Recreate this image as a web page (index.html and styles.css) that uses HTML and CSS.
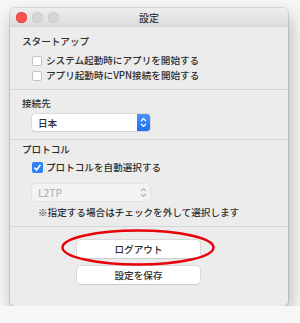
FILE: index.html
```html
<!DOCTYPE html>
<html lang="ja">

<head>
    <meta charset="UTF-8">
    <title>設定</title>
    <link rel="stylesheet" href="styles.css">
</head>

<body>
    <div class="window">
        <div class="titlebar">
            <div class="lights">
                <span class="light red"></span>
                <span class="light"></span>
                <span class="light"></span>
            </div>
            <div class="title">設定</div>
        </div>

        <section class="group group-startup">
            <h2>スタートアップ</h2>
            <label class="check-row"><span class="box"></span>システム起動時にアプリを開始する</label>
            <label class="check-row"><span class="box"></span>アプリ起動時にVPN接続を開始する</label>
        </section>

        <section class="group group-server">
            <h2>接続先</h2>
            <div class="select">
                <span class="select-text">日本</span>
                <span class="stepper">
                    <svg width="7" height="11" viewBox="0 0 7 11">
                        <path d="M1 4 L3.5 1.5 L6 4 M1 7 L3.5 9.5 L6 7" fill="none" stroke="#fff" stroke-width="1.2" />
                    </svg>
                </span>
            </div>
        </section>

        <section class="group group-protocol">
            <h2>プロトコル</h2>
            <label class="check-row"><span class="box checked">
                    <svg width="11" height="11" viewBox="0 0 11 11">
                        <path d="M2.4 5.6 L4.6 7.9 L8.4 2.8" fill="none" stroke="#fff" stroke-width="1.6" />
                    </svg>
                </span>プロトコルを自動選択する</label>
            <div class="select select-disabled">
                <span class="select-text">L2TP</span>
                <span class="stepper">
                    <svg width="7" height="11" viewBox="0 0 7 11">
                        <path d="M1 4 L3.5 1.5 L6 4 M1 7 L3.5 9.5 L6 7" fill="none" stroke="#b4b4b4" stroke-width="1.2" />
                    </svg>
                </span>
            </div>
            <p class="note">※指定する場合はチェックを外して選択します</p>
        </section>

        <section class="actions">
            <button class="btn">ログアウト</button>
            <button class="btn">設定を保存</button>
            <svg class="circle-mark" width="156" height="39" viewBox="0 0 156 39">
                <ellipse cx="78" cy="19.5" rx="75.5" ry="17" fill="none" stroke="#e8000b" stroke-width="2.4" />
            </svg>
        </section>
    </div>
</body>

</html>
```

FILE: styles.css
```css
body {
    margin: 0;
    background: #f7f7f7;
    font-family: "Noto Sans CJK JP", "Noto Sans", sans-serif;
    color: #2e2e2e;
    font-size: 9.6px;
    font-weight: 500;
}

.window {
    margin: 8px 0 0 10px;
    width: 278px;
    height: 298px;
    background: #ececec;
    border-radius: 5px;
    box-shadow: 0 0 0 1px rgba(0, 0, 0, 0.1), 2px 8px 18px rgba(0, 0, 0, 0.28);
    overflow: hidden;
}

.titlebar {
    height: 18px;
    border-bottom: 1px solid #d2d2d2;
    background: linear-gradient(#eeeeee, #dcdcdc);
    display: flex;
    align-items: center;
    position: relative;
}

.lights {
    display: flex;
    gap: 5px;
    padding-left: 6px;
}

.light {
    width: 11px;
    height: 11px;
    border-radius: 50%;
    background: #d5d5d5;
    box-shadow: inset 0 0 0 0.5px #c8c8c8;
}

.light.red {
    background: #fc4f4f;
    box-shadow: inset 0 0 0 0.5px #e0443e;
}

.title {
    position: absolute;
    left: 0;
    right: 0;
    text-align: center;
    font-size: 10px;
    color: #3a3a3a;
}

/*グループ*/

.group {
    border-bottom: 1px solid #d6d6d6;
    padding-left: 12px;
}

.group h2 {
    margin: 0;
    font-size: 9.6px;
    font-weight: 500;
    line-height: 12px;
}

.group-startup {
    padding-top: 8px;
    padding-bottom: 6px;
}

.group-startup h2 {
    margin-bottom: 6px;
}

.group-server {
    padding-top: 7px;
    padding-bottom: 8px;
}

.group-server h2 {
    margin-bottom: 5px;
}

.group-protocol {
    padding-top: 3px;
    padding-bottom: 8px;
}

.group-protocol h2 {
    margin-bottom: 5px;
}

.check-row {
    display: flex;
    align-items: center;
    height: 15px;
    padding-left: 10px;
    line-height: 15px;
}

.box {
    width: 10px;
    height: 10px;
    box-sizing: border-box;
    border: 1px solid #c4c4c4;
    border-radius: 2px;
    background: #fff;
    margin-right: 4px;
    display: flex;
}

.box.checked {
    width: 11px;
    height: 11px;
    margin-right: 3px;
    border: none;
    background: #2f7ff5;
}

/*セレクト*/

.select {
    margin-left: 10px;
    width: 118px;
    height: 17px;
    box-sizing: border-box;
    background: #fff;
    border-radius: 3px;
    box-shadow: 0 0 0 0.5px #c8c8c8, 0 1px 1px rgba(0, 0, 0, 0.08);
    display: flex;
    align-items: center;
    overflow: hidden;
}

.select-text {
    flex: 1;
    padding-left: 6px;
    font-size: 9.6px;
}

.stepper {
    width: 13px;
    height: 100%;
    background: linear-gradient(#4d93f8, #1f6ff2);
    display: flex;
    align-items: center;
    justify-content: center;
}

.group-protocol .select {
    margin-top: 9px;
}

.select-disabled {
    background: #f3f3f3;
    box-shadow: 0 0 0 0.5px #dadada;
    color: #b5b5b5;
}

.select-disabled .select-text {
    font-size: 10px;
}

.select-disabled .stepper {
    background: none;
}

.note {
    margin: 5px 0 0 16px;
    line-height: 12px;
}

/*ボタン*/

.actions {
    position: relative;
    padding: 13px 0 0 67px;
    display: flex;
    flex-direction: column;
    gap: 8px;
}

.btn {
    width: 123px;
    height: 18px;
    padding: 0;
    background: #fff;
    border: none;
    border-radius: 4px;
    box-shadow: 0 0 0 0.5px #c6c6c6, 0 1px 1px rgba(0, 0, 0, 0.1);
    font-family: inherit;
    font-size: 9.6px;
    font-weight: 500;
    color: #2e2e2e;
}

.circle-mark {
    position: absolute;
    left: 50px;
    top: 1px;
}
```
